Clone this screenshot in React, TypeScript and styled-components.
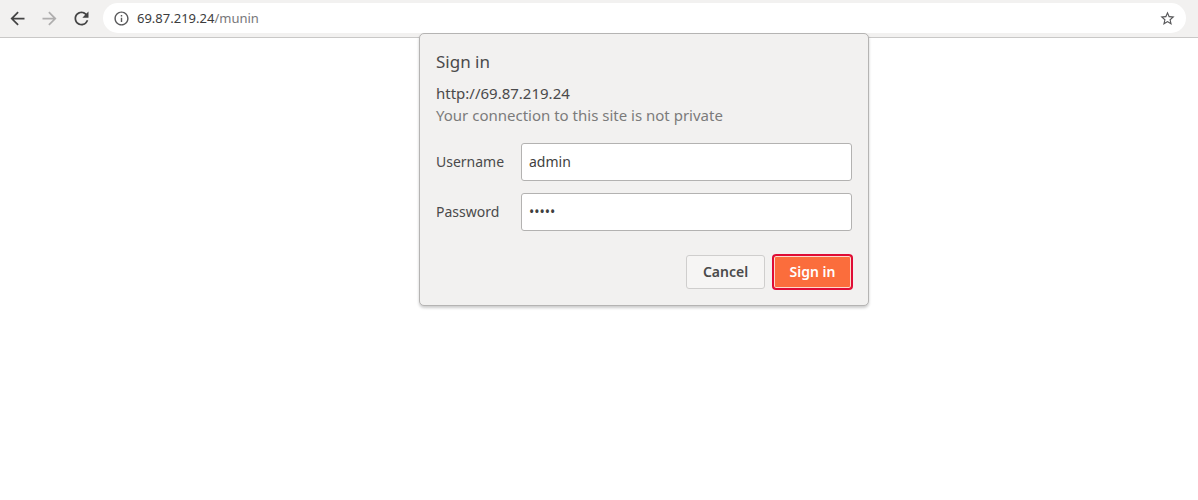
import React, { useState } from "react";
import styled, { createGlobalStyle } from "styled-components";
import {
  MdArrowBack,
  MdArrowForward,
  MdRefresh,
  MdInfoOutline,
  MdStarBorder,
} from "react-icons/md";

const GlobalStyle = createGlobalStyle`
  *, *::before, *::after { box-sizing: border-box; }
  body {
    margin: 0;
    background: #ffffff;
    color: #4a4a4b;
    font-family: "Noto Sans", "Open Sans", sans-serif;
    font-size: 14px;
  }
  button, input { font: inherit; color: inherit; }
`;

const Browser = styled.div`
  position: relative;
  min-height: 100vh;
`;

const Toolbar = styled.header`
  display: flex;
  align-items: center;
  gap: 11px;
  height: 38px;
  padding: 0 12px 1px 7px;
  background: #f2f1f0;
  border-bottom: 1px solid #c9c8c7;
`;

const IconButton = styled.button<{ $color?: string }>`
  display: flex;
  flex: none;
  padding: 0;
  border: 0;
  background: none;
  color: ${(p) => p.$color ?? "#444444"};
`;

const AddressBar = styled.div`
  display: flex;
  flex: 1;
  align-items: center;
  gap: 7px;
  height: 30px;
  padding: 0 10px;
  border-radius: 15px;
  background: #ffffff;
`;

const Address = styled.div`
  flex: 1;
  font-size: 13px;
  line-height: 20px;
  color: #3c3c3d;
`;

const Path = styled.span`
  color: #77777a;
`;

const Dialog = styled.form`
  position: absolute;
  top: 33px;
  left: calc(50% - 180px);
  width: 450px;
  padding: 16px;
  border: 1px solid #b5b4b3;
  border-radius: 5px;
  background: #f2f1f0;
  box-shadow: 0 2px 3px rgba(0, 0, 0, 0.2);
`;

const Title = styled.h1`
  margin: 0 0 8px;
  font-size: 17px;
  font-weight: 400;
  line-height: 24px;
`;

const Line = styled.p<{ $muted?: boolean }>`
  margin: 0;
  font-size: 15px;
  line-height: 22px;
  color: ${(p) => (p.$muted ? "#7b7b7b" : "inherit")};
`;

const Fields = styled.div`
  display: grid;
  grid-template-columns: 69px 1fr;
  align-items: center;
  gap: 12px 16px;
  margin-top: 17px;
`;

const Label = styled.label`
  padding-bottom: 2px;
`;

const Field = styled.input`
  width: 100%;
  height: 38px;
  padding: 0 7px 2px;
  border: 1px solid #b3b2b1;
  border-radius: 3px;
  outline: 0;
  background: #ffffff;
  color: #3f3f40;
`;

const Actions = styled.div`
  display: flex;
  justify-content: flex-end;
  gap: 8px;
  margin-top: 24px;
`;

const Button = styled.button<{ $primary?: boolean }>`
  min-width: 79px;
  height: 34px;
  padding: 0 15px 2px;
  border: 1px solid ${(p) => (p.$primary ? "#df0c36" : "#cfcecd")};
  border-radius: 3px;
  background: ${(p) => (p.$primary ? "#fb6d3c" : "#f6f5f4")};
  color: ${(p) => (p.$primary ? "#ffffff" : "#4a4a4b")};
  box-shadow: ${(p) =>
    p.$primary ? "0 0 0 1px #df0c36, inset 0 0 0 1px #ffd9cc" : "none"};
  font-weight: 600;
`;

export default function App() {
  const [username, setUsername] = useState("admin");
  const [password, setPassword] = useState("admin");

  return (
    <Browser>
      <GlobalStyle />
      <Toolbar>
        <IconButton type="button" aria-label="Back">
          <MdArrowBack size={21} />
        </IconButton>
        <IconButton type="button" aria-label="Forward" $color="#afaeae">
          <MdArrowForward size={21} />
        </IconButton>
        <IconButton type="button" aria-label="Reload">
          <MdRefresh size={21} />
        </IconButton>
        <AddressBar>
          <IconButton type="button" aria-label="Site information" $color="#58585a">
            <MdInfoOutline size={17} />
          </IconButton>
          <Address>
            69.87.219.24<Path>/munin</Path>
          </Address>
          <IconButton type="button" aria-label="Bookmark" $color="#58585a">
            <MdStarBorder size={17} />
          </IconButton>
        </AddressBar>
      </Toolbar>
      <Dialog onSubmit={(e) => e.preventDefault()}>
        <Title>Sign in</Title>
        <Line>http://69.87.219.24</Line>
        <Line $muted>Your connection to this site is not private</Line>
        <Fields>
          <Label htmlFor="username">Username</Label>
          <Field
            id="username"
            value={username}
            onChange={(e) => setUsername(e.target.value)}
          />
          <Label htmlFor="password">Password</Label>
          <Field
            id="password"
            type="password"
            value={password}
            onChange={(e) => setPassword(e.target.value)}
          />
        </Fields>
        <Actions>
          <Button type="button">Cancel</Button>
          <Button type="submit" $primary>
            Sign in
          </Button>
        </Actions>
      </Dialog>
    </Browser>
  );
}
